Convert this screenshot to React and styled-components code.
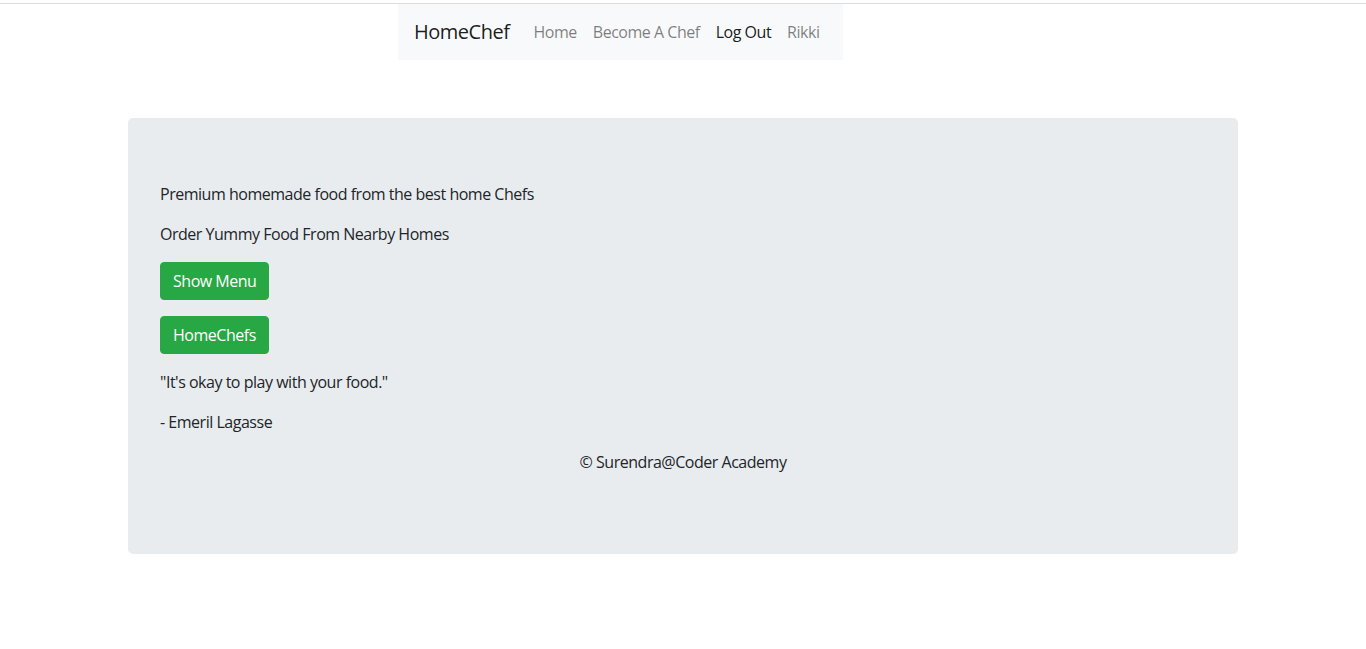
import React from "react";
import styled, { createGlobalStyle } from "styled-components";

const GlobalStyle = createGlobalStyle`
  * {
    box-sizing: border-box;
  }
  body {
    margin: 0;
    font-family: "Open Sans", "Noto Sans", sans-serif;
    font-size: 16px;
    line-height: 1.5;
    letter-spacing: -0.03em;
    color: #212529;
    background: #fff;
  }
`;

const TopRule = styled.div`
  height: 4px;
  border-bottom: 1px solid #dcdcdc;
`;

const NavWrap = styled.div`
  display: flex;
  padding-left: 398px;
`;

const Navbar = styled.nav`
  display: flex;
  align-items: center;
  padding: 8px 16px;
  background-color: #f8f9fa;
`;

const Brand = styled.a`
  font-size: 20px;
  line-height: 30px;
  padding: 5px 0;
  margin-right: 16px;
  color: rgba(0, 0, 0, 0.9);
  text-decoration: none;
`;

const NavLinks = styled.div`
  display: flex;
`;

const NavLink = styled.a`
  padding: 8px;
  color: ${(props) => (props.$active ? "rgba(0, 0, 0, 0.9)" : "rgba(0, 0, 0, 0.5)")};
  text-decoration: none;
`;

const Container = styled.div`
  width: 1140px;
  margin: 0 auto;
  padding: 0 15px;
`;

const Jumbotron = styled.div`
  margin-top: 58px;
  padding: 64px 32px;
  background-color: #e9ecef;
  border-radius: 4.8px;

  p {
    margin: 0 0 16px;
  }
`;

const Credit = styled.p`
  text-align: center;
`;

const ButtonRow = styled.div`
  margin-bottom: 16px;
`;

const Button = styled.button`
  font-family: inherit;
  font-size: 16px;
  line-height: 24px;
  letter-spacing: inherit;
  padding: 6px 12px;
  color: #fff;
  background-color: #28a745;
  border: 1px solid #28a745;
  border-radius: 4px;
  cursor: pointer;
`;

const links = [
  { label: "Home" },
  { label: "Become A Chef" },
  { label: "Log Out", active: true },
  { label: "Rikki" },
];

export default function App() {
  return (
    <>
      <GlobalStyle />
      <TopRule />
      <NavWrap>
        <Navbar>
          <Brand href="#">HomeChef</Brand>
          <NavLinks>
            {links.map(({ label, active }) => (
              <NavLink key={label} href="#" $active={active}>
                {label}
              </NavLink>
            ))}
          </NavLinks>
        </Navbar>
      </NavWrap>
      <Container>
        <Jumbotron>
          <p>Premium homemade food from the best home Chefs</p>
          <p>Order Yummy Food From Nearby Homes</p>
          <ButtonRow>
            <Button>Show Menu</Button>
          </ButtonRow>
          <ButtonRow>
            <Button>HomeChefs</Button>
          </ButtonRow>
          <p>"It's okay to play with your food."</p>
          <p>- Emeril Lagasse</p>
          <Credit>© Surendra@Coder Academy</Credit>
        </Jumbotron>
      </Container>
    </>
  );
}
